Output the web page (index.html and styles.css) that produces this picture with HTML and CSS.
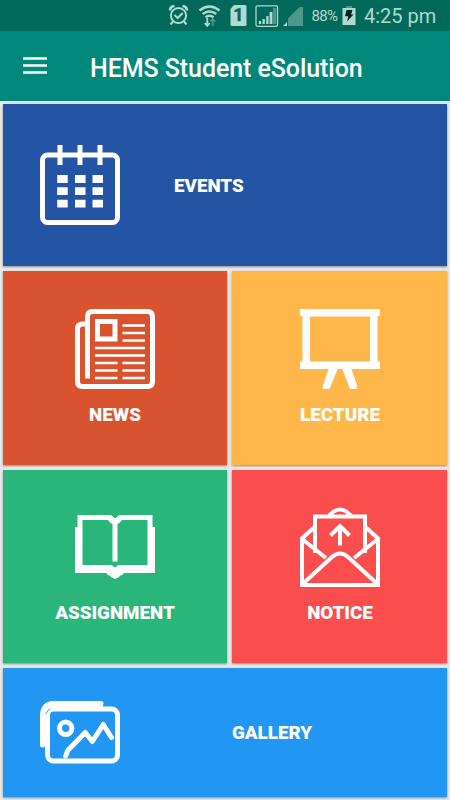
FILE: index.html
```html
<!DOCTYPE html>
<html lang="en">
<head>
<meta charset="utf-8">
<title>HEMS Student eSolution</title>
<link rel="stylesheet" href="styles.css">
</head>
<body>
<div class="status">
  <svg class="status-icons" width="150" height="31" viewBox="0 0 150 31" fill="none" stroke="#b2d8d2">
    <g stroke-width="2">
      <circle cx="28.5" cy="15.500" r="7.600"/>
      <path d="M24.500 15l3.200 3 5-5M23 21.500l-2.500 3M34 21.500l2.500 3"/>
      <path d="M20 10.500q0-4 4.500-4.500M37 10.500q0-4-4.500-4.500" stroke-width="2.600"/>
    </g>
    <g stroke-width="2.400">
      <path d="M49.500 10.500q10-8 20 0M52.700 14q6.800-5.200 13.600 0M55.500 17.300q4-3 8 0"/>
      <path d="M57.300 18v8M54.800 23l2.500 2.800 2.500-2.800" stroke-width="1.800"/>
      <path d="M62.800 26v-7M60.300 21.500l2.500-2.700 2.500 2.700" stroke="#4d978e" stroke-width="1.800"/>
    </g>
    <path d="M84 5h11q1.500 0 1.500 1.500v18q0 1.500-1.500 1.500H82q-1.500 0-1.500-1.500V9z" fill="#b2d8d2" stroke="none"/>
    <rect x="106" y="5.800" width="21.500" height="20.500" rx="1.500" stroke-width="1.300"/>
    <path d="M110 24v-3M113.700 24v-5M117.400 24v-8" stroke-width="2.300"/>
    <path d="M121 24V12" stroke-width="2.800"/>
    <path d="M124.500 24V8" stroke="#4d978e" stroke-width="3"/>
    <path d="M138 18.500L149 7.500h4V26h-15z" fill="#4d978e" stroke="none"/>
    <path d="M133 26l4-4v4z" fill="#b2d8d2" stroke="none"/>
    <text class="sim" x="88.300" y="21">1</text>
  </svg>
  <svg class="signal-end" width="4" height="31" viewBox="0 0 4 31"><path d="M0 7h3v19H0z" fill="#4d978e"/></svg>
  <span class="percent">88%</span>
  <svg class="battery" width="14" height="31" viewBox="0 0 14 31">
    <path d="M4 6h6v3H4z" fill="#4d978e"/>
    <path d="M.5 8h13v17H.5z" fill="#b2d8d2"/>
    <path d="M4.500 10h6L9 14.500h2.500L5 21.500l1.300-5.300H3z" fill="#00251f"/>
  </svg>
  <span class="clock">4:25 pm</span>
</div>
<header class="bar">
  <svg class="menu" width="24" height="18" viewBox="0 0 24 18"><path d="M0 1.500h24M0 8.500h24M0 15.500h24" stroke="#fff" stroke-width="2.700"/></svg>
  <h1>HEMS Student eSolution</h1>
</header>
<main class="grid">
  <a class="tile wide events">
    <svg width="80" height="80" viewBox="0 0 80 80" fill="none" stroke="#fff">
      <rect x="2.500" y="10" width="75" height="67.500" rx="5" stroke-width="5"/>
      <path d="M20 0v20M40 0v20M60 0v20" stroke-width="5"/>
      <path d="M17.200 34h10.500M35 34h10.500M52.500 34h10.500M17.200 46.200h10.500M35 46.200h10.500M52.500 46.200h10.500M17.200 58.700h10.500M35 58.700h10.500M52.500 58.700h10.500" stroke-width="7.800"/>
    </svg>
    <span class="label">EVENTS</span>
  </a>
  <a class="tile news">
    <svg width="80" height="81" viewBox="0 0 80 81" fill="none" stroke="#fff" stroke-width="5">
      <path d="M12.500 70.500V8.500q0-5 5-5h55q5 0 5 5v65q0 5-5 5h-65q-5 0-5-5V21q0-5 5-5h5"/>
      <rect x="22.500" y="21" width="17.500" height="17.500" transform="translate(0 -7.500)"/>
      <path d="M47.500 17.500H70M47.500 25H70M47.500 32.500H70M20 40h50M20 47.500h50M20 55h22.500M47.500 55H70M20 62.500h22.500M47.500 62.500H70M20 70h22.500M47.500 70H70" stroke-width="2.700"/>
    </svg>
    <span class="label">NEWS</span>
  </a>
  <a class="tile lecture">
    <svg width="80" height="81" viewBox="0 0 80 81" fill="#fff">
      <path fill-rule="evenodd" d="M0 1h80v7h-2.500v45.500H80V61H0v-7.500h2.500V8H0zM10 8.500v45h60v-45z"/>
      <path d="M29 60h9L29.500 81H23q-.8-2.500.5-5zM42 60h9l5.500 15.500q1 3 0 5.500H50z"/>
    </svg>
    <span class="label">LECTURE</span>
  </a>
  <a class="tile assignment">
    <svg width="80" height="80" viewBox="0 0 80 80" fill="#fff">
      <path fill-rule="evenodd" d="M2.500 8H36l4 3.500L44 8h33.500v12H80v46H49l-2 2q-2 0-3 2l-4 2-4-2q-1-2-3-2l-2-2H0V20h2.500zM7.500 13v45h29l3.500 2.500 3.500-2.500h29V13H47q-2 3-4.500 4v37.500h-5V17q-2.500-1-4.500-4z"/>
    </svg>
    <span class="label">ASSIGNMENT</span>
  </a>
  <a class="tile notice">
    <svg width="80" height="80" viewBox="0 0 80 80" fill="none" stroke="#fff" stroke-width="4">
      <path d="M15 46V9.500h50V46M29 8.500q11-12 22 0M14 20.500L2 31.500V78h76V31.500L66 20.500M2 32l24 19M78 32L54 51M2 77.500L32 50q8-7 16 0L78 77.500"/>
      <path d="M40 38.500V19M30.500 28.500L40 19 49.500 28.500"/>
    </svg>
    <span class="label">NOTICE</span>
  </a>
  <a class="tile wide gallery">
    <svg width="80" height="80" viewBox="0 0 80 80" fill="none" stroke="#fff" stroke-width="5">
      <rect x="7.500" y="19" width="70" height="52" rx="6"/>
      <path d="M2.500 55V24q1-10 11-10.500h47.500" stroke-linecap="round"/>
      <path d="M5 55V24q1-6.500 8-8.500h50" stroke-width="5"/>
      <path d="M5.500 23.500l4.500-5" stroke="#2196f3" stroke-width="1"/>
      <circle cx="25.700" cy="38.300" r="6.200"/>
      <path d="M25.700 66l2-5.500 17.500-18 7.100 9L63.300 34.500 71.500 47.500" stroke-linecap="round" stroke-linejoin="round"/>
    </svg>
    <span class="label">GALLERY</span>
  </a>
</main>
</body>
</html>
```
FILE: styles.css
```css
* { box-sizing: border-box; }
body {
  margin: 0;
  width: 450px;
  height: 800px;
  overflow: hidden;
  background: #e8e8e8;
  font-family: Roboto, sans-serif;
}
svg { display: block; flex: none; }
.status {
  display: flex;
  height: 31px;
  padding-left: 150px;
  background: #00695c;
  color: #b2d8d2;
  line-height: 32px;
  white-space: nowrap;
}
.sim { fill: #00695c; stroke: #00695c; stroke-width: .4; font: bold 18px Roboto, sans-serif; text-anchor: middle; }
.percent { width: 30px; margin-left: 7.500px; font-size: 15px; letter-spacing: -.7px; }
.battery { margin-left: .5px; }
.clock { margin-left: 8px; font-size: 20px; letter-spacing: 0; }
.bar {
  display: flex;
  align-items: center;
  height: 70px;
  padding-left: 23px;
  background: #00897b;
  color: #fff;
}
h1 { margin: 5px 0 0 43px; font-size: 25px; font-weight: 500; line-height: 32px; letter-spacing: -.07px; white-space: nowrap; }
.grid {
  display: grid;
  grid-template-columns: 224px 215px;
  grid-template-rows: 162px 194px 193px 129px;
  gap: 5px;
  padding: 3px;
}
.tile {
  display: flex;
  flex-direction: column;
  align-items: center;
  color: #fff;
  box-shadow: 0 1px 2px rgba(0, 0, 0, .4);
}
.label { font-size: 18.800px; font-weight: 900; line-height: 22px; white-space: nowrap; }
.tile:not(.wide) { padding-top: 37px; }
.tile:not(.wide) .label { margin-top: 15px; }
.tile.lecture, .tile.notice { padding-left: 1px; }
.wide { grid-column: 1 / 3; flex-direction: row; padding-left: 37px; }
.events { background: #2355a4; }
.events .label { margin: 2px 0 0 54px; }
.news { background: #d9542e; }
.lecture { background: #ffb74a; }
.assignment { background: #2ab67b; }
.notice { background: #fa4e4e; }
.gallery { background: #2196f3; }
.gallery svg { margin-top: -5px; }
.gallery .label { margin-left: 112px; }
```
